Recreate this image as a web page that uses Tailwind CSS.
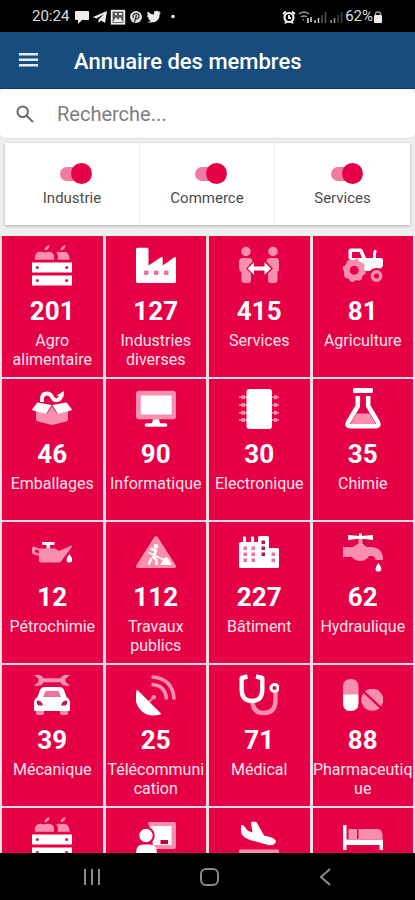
<!DOCTYPE html>
<html lang="fr">
<head>
<meta charset="utf-8">
<meta name="viewport" content="width=device-width, initial-scale=1">
<title>Annuaire des membres</title>
<script src="https://cdn.jsdelivr.net/npm/@tailwindcss/browser@4"></script>
</head>
<body class="h-screen flex flex-col overflow-hidden bg-[#eeeeef] font-[Roboto,sans-serif]">

<!-- System status bar -->
<div class="h-8 shrink-0 bg-black text-[#dcdcdc] flex items-center justify-between pl-8 pr-8 pt-px text-[15px]">
  <div class="flex items-center gap-[2px]">
    <span class="w-10">20:24</span>
    <svg class="w-4 h-4" viewBox="0 0 16 16" fill="#eee"><path d="M2 2h12q1 0 1 1v7q0 1-1 1H8l-4 4v-4H2q-1 0-1-1V3q0-1 1-1z"/></svg>
    <svg class="w-4 h-4" viewBox="0 0 16 16" fill="#eee"><path d="M15 2L1 8l3.500 1.500L12 5 6.500 10.500V14l2.500-2.500 4 2.500z"/></svg>
    <svg class="w-4 h-4" viewBox="0 0 16 16"><rect x="1.700" y="1.700" width="12.600" height="13" fill="#555" stroke="#eee" stroke-width="1.800"/><path d="M3 13l3-5 2 3 2-3 3 5zM5 4h2v2H5zM9 4h3v2H9z" fill="#eee"/></svg>
    <svg class="w-4 h-4" viewBox="0 0 16 16"><circle cx="8" cy="8" r="6" fill="#ddd"/><path d="M6.500 13l2-7M5.500 9C3 4 11 3 11 7c0 3-3 3.500-3.500 2" fill="none" stroke="#333" stroke-width="1.300"/></svg>
    <svg class="w-4 h-4" viewBox="0 0 16 16" fill="#eee"><path d="M15 4l-1.500 1.500C14 11 9 15 1 13q2.500 0 4-1.200-2.200-.4-3-2.300h1.300Q1 8.500 1 6l1.400.4Q.4 4.500 1.700 2.500 4 5.200 8 5.400C7.200 1.800 11 1 12.500 2.800L14.500 2l-1 1.800z"/></svg>
    <svg class="w-4 h-4" viewBox="0 0 16 16" fill="#eee"><circle cx="9" cy="7.500" r="1.800"/></svg>
  </div>
  <div class="flex items-center">
    <svg class="w-4 h-4" viewBox="0 0 16 16"><circle cx="8" cy="8.500" r="4.500" fill="none" stroke="#eee" stroke-width="2.200"/><path d="M2 5L5 2.500M14 5l-3-2.500M4 14.500L6 12M12 14.500L10 12M8 6v3h2" stroke="#eee" stroke-width="1.900" fill="none"/></svg>
    <svg class="w-4 h-4" viewBox="0 0 16 16" fill="none" stroke="#999" stroke-width="1.500"><path d="M2 5q5-4 10 0M4 8q3-2 6 0M6 11l1-.5"/><path d="M11 9v5M14 8v5" stroke="#ddd"/></svg>
    <svg class="w-4 h-4" viewBox="0 0 16 16" stroke-width="1.500"><path d="M2 11v3M5.500 9v5" stroke="#ccc"/><path d="M9 6v8M12.500 3v11" stroke="#555"/></svg>
    <svg class="w-4 h-4" viewBox="0 0 16 16" stroke-width="1.500"><path d="M2 11v3M5.500 9v5" stroke="#999"/><path d="M9 6v8M12.500 3v11" stroke="#444"/></svg>
    <span>62%</span>
    <svg class="w-2.5 h-4" viewBox="0 0 10 16"><path d="M2.500 7V5q0-2 2.500-2t2.500 2v2" fill="none" stroke="#999" stroke-width="1.500"/><rect x="1" y="6" width="8" height="8" rx="1" fill="#eee"/></svg>
  </div>
</div>

<!-- App bar -->
<header class="h-[57px] shrink-0 bg-[#174c7c] border-b border-[#0e3a64] text-white flex items-center px-[19px] gap-9">
  <button type="button" aria-label="Menu" class="w-[19px] h-5">
    <svg class="w-full h-full" viewBox="0 0 19 20" fill="#e4edf6"><path d="M0 3h19v2.500H0zM0 8.500h19V11H0zM0 14h19v2.500H0z"/></svg>
  </button>
  <h1 class="text-[22px] leading-8 font-medium pt-1">Annuaire des membres</h1>
</header>

<main class="flex-1 min-h-0 overflow-hidden flex flex-col">
  <label class="shrink-0 h-[50px] bg-white rounded-md border-b border-[#dfdfdf] flex items-center px-4 gap-[23px]">
    <svg class="w-[18px] h-[18px] shrink-0" viewBox="0 0 18 18" fill="none" stroke="#6c6c6c" stroke-width="2"><circle cx="6.700" cy="6.700" r="5.300"/><path d="M10.700 10.700L17 17"/></svg>
    <input type="text" aria-label="Recherche" placeholder="Recherche..." class="flex-1 min-w-0 outline-none bg-transparent text-[20px] leading-7 text-gray-700 placeholder:text-[#7d7d7d]">
  </label>

  <div class="shrink-0 mx-[5px] mt-1 h-[82px] bg-white grid grid-cols-3 divide-x divide-[#ececec] shadow-[0_1px_3px_rgba(0,0,0,0.28)] text-[15px] leading-5 text-[#4c4c4c]">
    <label class="flex flex-col items-center pt-5 gap-1">
      <input type="checkbox" checked class="appearance-none relative w-8 h-[21px] ml-2 before:absolute before:left-0 before:top-1 before:w-7 before:h-[14px] before:rounded-full before:bg-[#f279a0] after:absolute after:right-0 after:top-0 after:w-[21px] after:h-[21px] after:rounded-full after:bg-[#e60045]">
      Industrie
    </label>
    <label class="flex flex-col items-center pt-5 gap-1">
      <input type="checkbox" checked class="appearance-none relative w-8 h-[21px] ml-2 before:absolute before:left-0 before:top-1 before:w-7 before:h-[14px] before:rounded-full before:bg-[#f279a0] after:absolute after:right-0 after:top-0 after:w-[21px] after:h-[21px] after:rounded-full after:bg-[#e60045]">
      Commerce
    </label>
    <label class="flex flex-col items-center pt-5 gap-1">
      <input type="checkbox" checked class="appearance-none relative w-8 h-[21px] ml-2 before:absolute before:left-0 before:top-1 before:w-7 before:h-[14px] before:rounded-full before:bg-[#f279a0] after:absolute after:right-0 after:top-0 after:w-[21px] after:h-[21px] after:rounded-full after:bg-[#e60045]">
      Services
    </label>
  </div>

  <!-- Category tiles -->
  <nav class="mt-[11px] px-[2px] grid grid-cols-4 auto-rows-[141px] gap-x-[3px] gap-y-[2px] bg-[#fbdde4] text-center text-[16px] leading-[19px] text-[#ffe3ea] *:bg-[#e60045] *:pt-[9px] *:min-w-0 *:wrap-anywhere [&_svg]:mx-auto [&_svg]:w-10 [&_svg]:h-[42px] [&_svg]:mb-[9px] [&_strong]:block [&_strong]:text-[26px] [&_strong]:leading-[30px] [&_strong]:font-bold [&_strong]:text-white [&_strong]:mb-[5px]">
    <a href="#agro">
      <svg viewBox="0 0 40 42" id="crate"><g fill="#f88fae"><path d="M3 14.800C2 8 6 5 12.500 7.500 19 5 23 8 22 14.800zM12.500 5.500q0-4.500 5-5.500 0 4.500-5 5.500z"/><path d="M25.500 14.800q1.500-4-1.300-7.500 2-1 5 0 7.800-2.300 8.600 7.500zM28.500 5.500q0-4.500 5-5.500 0 4.500-5 5.500z"/></g><path fill="#fff" d="M0 17.500h40v10H0zM0 30.500h40v10H0z"/><g fill="#b51c4f"><circle cx="5.300" cy="22.500" r="1.500"/><circle cx="34.700" cy="22.500" r="1.500"/><circle cx="5.300" cy="35.500" r="1.500"/><circle cx="34.700" cy="35.500" r="1.500"/></g></svg>
      <strong>201</strong>Agro alimentaire
    </a>
    <a href="#industries">
      <svg viewBox="0 0 40 42"><path fill="#fff" d="M1.500 2.700H11q1.500 0 1.500 1.500V20.500L25 12.300q1.700-1 1.700 1V20.500L38.300 12.300q1.700-1 1.700 1V36.500q0 1.500-1.500 1.500h-37Q0 38 0 36.500V4.200Q0 2.700 1.500 2.700z"/><g fill="#f36f96"><rect x="8" y="25.500" width="4.500" height="4.500" rx="1"/><rect x="18" y="25.500" width="4.500" height="4.500" rx="1"/><rect x="28" y="25.500" width="4.500" height="4.500" rx="1"/></g></svg>
      <strong>127</strong>Industries diverses
    </a>
    <a href="#services">
      <svg viewBox="0 0 40 42"><g fill="#f88fae"><circle cx="7" cy="6.500" r="4.700"/><circle cx="34" cy="6.500" r="4.700"/><path d="M4 13h6q3.500 0 3.500 3.500L7 23.500l5 5V35q0 3-3 3H5.500q-3 0-3-3V27Q0 26 0 23v-6.500Q0 13 4 13zM37 13h-6q-3.500 0-3.500 3.500l6.500 7-5 5V35q0 3 3 3h3.500q3 0 3-3V27Q40 26 40 23v-6.500Q40 13 37 13z"/></g><path fill="#fff" d="M8.500 23.500l6.500-6.300v4.300h10.500v-4.300l6.500 6.300-6.500 6.300v-4.300H15v4.300z"/></svg>
      <strong>415</strong>Services
    </a>
    <a href="#agriculture">
      <svg viewBox="0 0 40 42"><path fill="#fff" fill-rule="evenodd" d="M5.500 13.500V6q0-2.500 2.500-2.500h9q2 0 2.800 2L23 13h7V9q0-2.800 2-4.500l1.800 1.500Q33 7.500 33 9v4h4.500q2.500 0 2.500 2.500V20q0 2.500-2.500 3.500-7-2-10.500 2.500h-5zM9 13h10l-2.500-6H9z"/><circle cx="11.200" cy="25.300" r="7.500" fill="#e60045" stroke="#f88fae" stroke-width="6"/><circle cx="11.200" cy="25.300" r="10.700" fill="none" stroke="#f88fae" stroke-width="1.800" stroke-dasharray="4.200 4.200"/><circle cx="33.500" cy="31" r="4.200" fill="#e60045" stroke="#f88fae" stroke-width="3.400"/></svg>
      <strong>81</strong>Agriculture
    </a>

    <a href="#emballages">
      <svg viewBox="0 0 40 42"><path fill="#f88fae" d="M4 23l11 2.500 5-7 5 7L36 23v8q0 2-2 2.500L20 37 6 33.500Q4 33 4 31z"/><path fill="#fff" d="M5.500 14.500L19.800 17l-5.800 9-13-3.500Q-.3 22 .3 21zM34.500 14.500L20.200 17l5.800 9 13-3.500q1.300-.5.7-1.500z"/><path fill="none" stroke="#fff" stroke-width="3.800" d="M10 14V11q0-5.500 5-5.500 3.500 0 5 3.500t5 3q4-.5 4-5"/><path fill="#fff" d="M24.500 7.500l7.500-4.500-.5 6z"/></svg>
      <strong>46</strong>Emballages
    </a>
    <a href="#informatique">
      <svg viewBox="0 0 40 42"><rect y="2.700" width="40" height="28.500" rx="3" fill="#f88fae"/><rect x="4.700" y="7.500" width="31" height="19" fill="#fff"/><path fill="#fff" d="M17 31.200h6l1 4h5.500q1.800 0 1.800 1.800t-1.800 1.800h-19q-1.800 0-1.800-1.800t1.800-1.800H16z"/></svg>
      <strong>90</strong>Informatique
    </a>
    <a href="#electronique">
      <svg viewBox="0 0 40 42"><path stroke="#f88fae" stroke-width="1.500" d="M0 9.200h40M0 17h40M0 24.800h40M0 32h40"/><path stroke="#f88fae" stroke-width="4" d="M2.500 9.200H6M2.500 17H6M2.500 24.800H6M2.500 32H6M35 9.200h3M35 17h3M35 24.800h3M35 32h3"/><rect x="7.500" y="1" width="25.500" height="40" rx="3" fill="#fff"/></svg>
      <strong>30</strong>Electronique
    </a>
    <a href="#chimie">
      <svg viewBox="0 0 40 42"><path fill="#fff" d="M11.500 0h17q1.500 0 1.500 1.500v2q0 1.500-1.500 1.500h-17Q10 5 10 3.500v-2Q10 0 11.500 0z"/><path fill="none" stroke="#fff" stroke-width="4.600" stroke-linejoin="round" d="M14.800 8v10L5.300 34q-2 4 1.700 4.300h26q3.700-.3 1.700-4.300L25.200 18V8"/><path fill="#f88fae" d="M13.500 25.500h13L32.500 36h-25z"/></svg>
      <strong>35</strong>Chimie
    </a>

    <a href="#petrochimie">
      <svg viewBox="0 0 40 42"><path fill="#f88fae" fill-rule="evenodd" d="M6.500 17.500H23l4 2.500 12-5.200q1.500-.3.800 1.200L29 30.500q-.8 1-2 1H9q-2 0-2-2V25l-5-1.500q-2-.7-2-2.500v-3.500Q0 15 2.500 15.500zM3 18.500v2.800l4 1.200v-3z"/><path fill="#fff" d="M10 11h12.500v3H18v3.500h-3.500V14H10zM37.300 23q3 3.800 3 5.700a2.900 2.900 0 01-5.800 0q0-1.900 2.800-5.700z"/></svg>
      <strong>12</strong>Pétrochimie
    </a>
    <a href="#travaux">
      <svg viewBox="0 0 40 42"><path fill="#f88fae" d="M18 6.500q2-3 4 0L39.500 34q1.500 3-1.500 3H2q-3 0-1.500-3z"/><g fill="none" stroke="#fff" stroke-width="2.500"><path d="M14.500 17.500L20 20l-2.500 6 3 3v5M15.500 27l-3 6.500"/><path d="M12 21l18 9" stroke-width="1.800"/></g><circle cx="20" cy="15.500" r="2.400" fill="#fff"/><path fill="#fff" d="M24 34l5-8 3 1 4 7z"/></svg>
      <strong>112</strong>Travaux publics
    </a>
    <a href="#batiment">
      <svg viewBox="0 0 40 42"><path fill="#fff" d="M2 11h2V5.500h3V11h5V5.500h3V11h4V6.500Q19 5 20.500 5h8Q30 5 30 6.500V17h8.500q1.500 0 1.500 1.500v17q0 1.500-1.500 1.500h-37Q0 37 0 35.500V12.500Q0 11 2 11z"/><path fill="#ee749a" d="M4.500 15.500H8V19H4.500zM12.500 15.500H16V19h-3.500zM4.500 21.500H8V25H4.500zM12.500 21.500H16V25h-3.500zM4.500 27.500H8V31H4.500zM12.500 27.500H16V31h-3.500zM32.500 21.500H36V25h-3.500zM32.500 27.500H36V31h-3.500z"/><path fill="#ba124a" d="M22.500 9.500H26V13h-3.500zM22.500 15.500H26V19h-3.500zM22.500 21.500H26V25h-3.500z"/></svg>
      <strong>227</strong>Bâtiment
    </a>
    <a href="#hydraulique">
      <svg viewBox="0 0 40 42"><path fill="#f88fae" d="M15.500 5h4v7.500l4 3.500H29q11 1 11 13h-7.500q0-4-4-4H26q-3 5-8.500 5T9 26H0V16h10l5.500-3.500z"/><path fill="#fff" d="M5 4l12.500 1L30 4v5L17.500 7.500 5 9zM16 2.500h3V8h-3zM35.300 32q3 3.800 3 5.700a2.900 2.900 0 01-5.800 0q0-1.900 2.800-5.700z"/></svg>
      <strong>62</strong>Hydraulique
    </a>

    <a href="#mecanique">
      <svg viewBox="0 0 40 42"><path fill="#f88fae" d="M2 1.200Q9.500-.5 11.500 4.300h17Q30.500-.5 38 1.200L33.500 4.500v3.600L38 11.400q-7.500 1.700-9.500-3.100h-17Q9.500 13.100 2 11.400L6.500 8.100V4.500z"/><path fill="#f88fae" d="M4 34h8v5q0 2-2 2H6q-2 0-2-2zM28 34h8v5q0 2-2 2h-4q-2 0-2-2z"/><path fill="#fff" d="M12.500 13h15q3 0 4.500 3l2.500 7q3.500 2 3.500 6v6.500q0 1.500-1.500 1.500h-33Q2 37 2 35.500V29q0-4 3.500-6L8 16q1.500-3 4.500-3z"/><path fill="#f07399" d="M13.500 17h13l2.500 6H11z"/><path fill="#b51c4f" d="M5 26.500q5 0 6 5H6.500q-2.500-1-1.500-5zM35 26.500q-5 0-6 5h4.500q2.500-1 1.500-5z"/></svg>
      <strong>39</strong>Mécanique
    </a>
    <a href="#telecom">
      <svg viewBox="0 0 40 42"><path fill="none" stroke="#f88fae" stroke-width="3.600" d="M15.500 3Q37 4 38 25.500M15.500 10.500Q29.500 11 30.500 25.500"/><path stroke="#f88fae" stroke-width="2" d="M12 29l6-6"/><circle cx="17.700" cy="23.300" r="2.300" fill="#f88fae"/><path fill="#fff" d="M2 16.500L24.500 39q1 1-.5 1.500Q12 44 4.500 36-3 27.500.5 17q.5-1.500 1.500-.5z"/></svg>
      <strong>25</strong>Télécommuni<wbr>cation
    </a>
    <a href="#medical">
      <svg viewBox="0 0 40 42"><path fill="none" stroke="#f88fae" stroke-width="4.400" d="M13.500 27q0 12 11.500 12t11.500-13V18"/><path fill="none" stroke="#fff" stroke-width="4.400" stroke-linejoin="round" d="M8.500 2.500L2.700 4v12Q3 27 13 27t10.300-11V4L17 2.500"/><circle cx="35.500" cy="14" r="3.500" fill="#e60045" stroke="#fff" stroke-width="3"/></svg>
      <strong>71</strong>Médical
    </a>
    <a href="#pharma">
      <svg viewBox="0 0 40 42"><path fill="#f88fae" d="M0 21v-8q0-8 7.700-8t7.800 8v8z"/><path fill="#fff" d="M0 20.500h15.500V29q0 8-7.800 8T0 29z"/><circle cx="29.300" cy="25.700" r="11" fill="#f88fae"/><path stroke="#e60045" stroke-width="2.400" d="M20.500 17.500l17.500 16.500"/></svg>
      <strong>88</strong>Pharmaceutique
    </a>

    <a href="#agro-suite" aria-label="Agro alimentaire">
      <svg viewBox="0 0 40 42"><use href="#crate"/></svg>
    </a>
    <a href="#formation" aria-label="Formation">
      <svg viewBox="0 0 40 42"><path fill="#f88fae" d="M12 5h26q2 0 2 2v23q0 2-2 2H18z"/><path fill="#fff" d="M14.500 9h21v19H17z"/><rect x="24.500" y="23" width="7.500" height="4" fill="#c50038"/><circle cx="10" cy="18.500" r="7.700" fill="#fff" stroke="#e60045" stroke-width="2"/><path fill="#fff" d="M0 36q0-8.500 7-8.500h7q7 0 7 8.500v6H0z"/></svg>
    </a>
    <a href="#transport" aria-label="Transport">
      <svg viewBox="0 0 40 42"><path fill="#fff" d="M2 8.500q2-1 3 .5l4 5 4.500 1.300L12 6q0-1.500 2-1.500l3.500.5L25 18.500l7 1.800q5 2 5 4.500-1.500 4-7 3.500L11 23Q2 20 2 14z"/><rect y="32.500" width="40" height="5" rx="1" fill="#f88fae"/></svg>
    </a>
    <a href="#hotellerie" aria-label="Hôtellerie">
      <svg viewBox="0 0 40 42"><path fill="#f88fae" d="M5.500 12h8.500v10H5.500zM15.500 12H34q5.500.5 5.500 6v4h-24z"/><path fill="#fff" d="M0 9q0-1 1-1h1.500q1 0 1 1v13.500H40V32q0 1-1 1h-1.500q-1 0-1-1v-4h-33v4q0 1-1 1H1q-1 0-1-1z"/></svg>
    </a>
  </nav>
</main>

<!-- System navigation -->
<footer class="h-[47px] shrink-0 bg-black grid grid-cols-3 place-items-center px-8">
  <button type="button" aria-label="Applications récentes"><svg class="w-6 h-6" viewBox="0 0 24 24" stroke="#8a8a8a" stroke-width="2"><path d="M6 4v16M13 4v16M20 4v16"/></svg></button>
  <button type="button" aria-label="Accueil"><svg class="w-6 h-6" viewBox="0 0 24 24" fill="none" stroke="#8a8a8a" stroke-width="2"><rect x="5" y="4" width="17" height="16" rx="5"/></svg></button>
  <button type="button" aria-label="Retour"><svg class="w-6 h-6" viewBox="0 0 24 24" fill="none" stroke="#8a8a8a" stroke-width="2"><path d="M17 4l-9 8 9 8"/></svg></button>
</footer>
</body>
</html>
